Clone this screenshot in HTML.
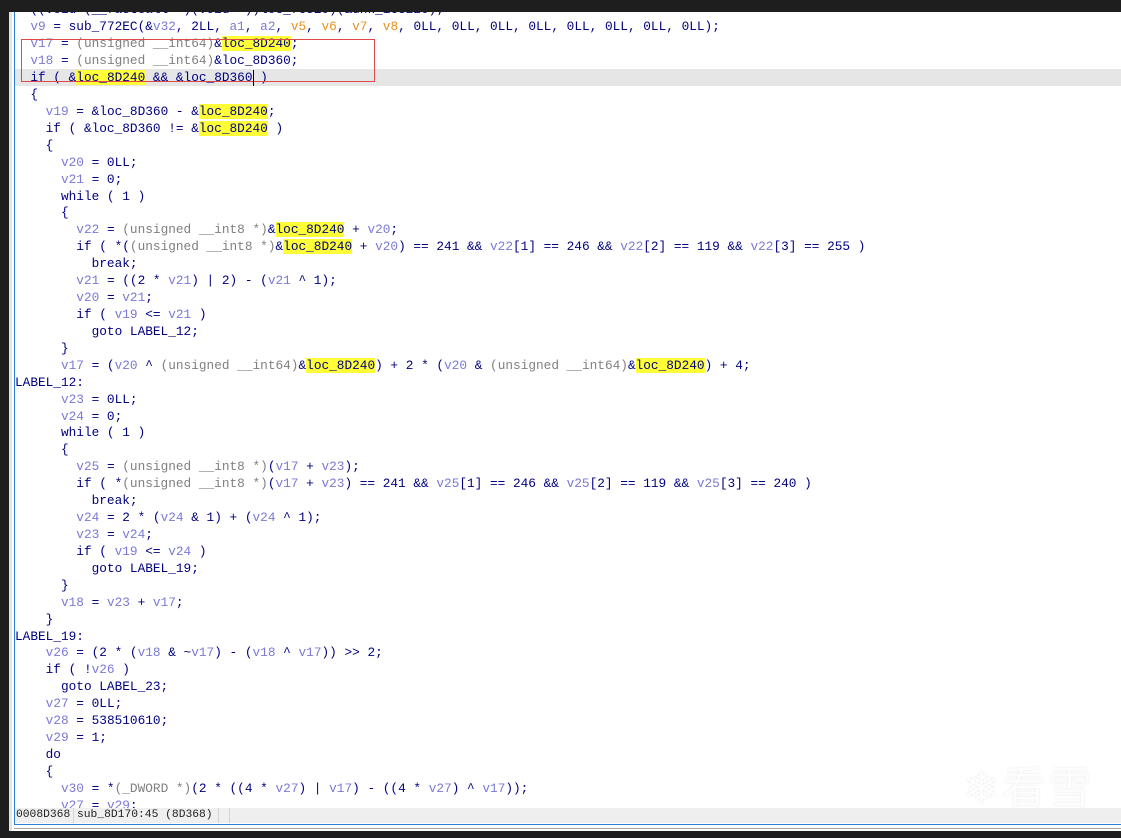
<!DOCTYPE html>
<html><head><meta charset="utf-8"><style>
html,body{margin:0;padding:0;width:1121px;height:838px;overflow:hidden;background:#1e1e1e;}
#main{position:absolute;left:9px;top:12px;width:1112px;height:819px;background:#fff;}
#code{position:absolute;left:15px;top:2.4px;margin:0;font-family:"Liberation Mono",monospace;font-size:12.78px;line-height:16.92px;color:#000080;white-space:pre;}
.v{color:#7a7ad6}.t{color:#808080}.o{color:#e8901e}.h{background:#ffff38}
#curline{position:absolute;left:15px;top:69px;width:1106px;height:17px;background:#e6e6e6;}
#box{position:absolute;left:21px;top:39px;width:354px;height:43px;border:1px solid #e04848;box-sizing:border-box;}
#cursor{position:absolute;left:253px;top:70px;width:1px;height:16px;background:#000;}
#status{position:absolute;left:15px;top:808px;width:1106px;height:15px;background:#efefef;font-family:"Liberation Mono",monospace;font-size:11.3px;line-height:15px;color:#222;}
#status span{position:absolute;top:0}
.sep{position:absolute;top:0;width:1px;height:15px;background:#d4d4d4}
#bl{position:absolute;left:14px;top:824px;width:1107px;height:1px;background:#2a7fd6}
#gl{position:absolute;left:14px;top:828px;width:1107px;height:1px;background:#a8a8a8}
#wm{position:absolute;left:963px;top:752px;font-family:"Noto Sans CJK SC",sans-serif;font-size:44px;color:#fdfdfd;text-shadow:0 0 2px #e6e6e6;letter-spacing:2px;}
</style></head><body>
<div id="main"></div>
<div style="position:absolute;left:9px;top:12px;width:3px;height:819px;background:#e4e4e4"></div>
<div style="position:absolute;left:14px;top:12px;width:1px;height:812px;background:#2a7fd6"></div>
<div id="curline"></div>
<pre id="code">  ((void (__fastcall *)(void *))loc_7C5E0)(&amp;unk_1C3220);
  <span class="v">v9</span> = sub_772EC(&amp;<span class="v">v32</span>, 2LL, <span class="v">a1</span>, <span class="v">a2</span>, <span class="o">v5</span>, <span class="o">v6</span>, <span class="o">v7</span>, <span class="o">v8</span>, 0LL, 0LL, 0LL, 0LL, 0LL, 0LL, 0LL, 0LL);
  <span class="v">v17</span> = <span class="t">(unsigned __int64)</span>&amp;<span class="h">loc_8D240</span>;
  <span class="v">v18</span> = <span class="t">(unsigned __int64)</span>&amp;loc_8D360;
  if ( &amp;<span class="h">loc_8D240</span> &amp;&amp; &amp;loc_8D360 )
  {
    <span class="v">v19</span> = &amp;loc_8D360 - &amp;<span class="h">loc_8D240</span>;
    if ( &amp;loc_8D360 != &amp;<span class="h">loc_8D240</span> )
    {
      <span class="v">v20</span> = 0LL;
      <span class="v">v21</span> = 0;
      while ( 1 )
      {
        <span class="v">v22</span> = <span class="t">(unsigned __int8 *)</span>&amp;<span class="h">loc_8D240</span> + <span class="v">v20</span>;
        if ( *(<span class="t">(unsigned __int8 *)</span>&amp;<span class="h">loc_8D240</span> + <span class="v">v20</span>) == 241 &amp;&amp; <span class="v">v22</span>[1] == 246 &amp;&amp; <span class="v">v22</span>[2] == 119 &amp;&amp; <span class="v">v22</span>[3] == 255 )
          break;
        <span class="v">v21</span> = ((2 * <span class="v">v21</span>) | 2) - (<span class="v">v21</span> ^ 1);
        <span class="v">v20</span> = <span class="v">v21</span>;
        if ( <span class="v">v19</span> &lt;= <span class="v">v21</span> )
          goto LABEL_12;
      }
      <span class="v">v17</span> = (<span class="v">v20</span> ^ <span class="t">(unsigned __int64)</span>&amp;<span class="h">loc_8D240</span>) + 2 * (<span class="v">v20</span> &amp; <span class="t">(unsigned __int64)</span>&amp;<span class="h">loc_8D240</span>) + 4;
LABEL_12:
      <span class="v">v23</span> = 0LL;
      <span class="v">v24</span> = 0;
      while ( 1 )
      {
        <span class="v">v25</span> = <span class="t">(unsigned __int8 *)</span>(<span class="v">v17</span> + <span class="v">v23</span>);
        if ( *<span class="t">(unsigned __int8 *)</span>(<span class="v">v17</span> + <span class="v">v23</span>) == 241 &amp;&amp; <span class="v">v25</span>[1] == 246 &amp;&amp; <span class="v">v25</span>[2] == 119 &amp;&amp; <span class="v">v25</span>[3] == 240 )
          break;
        <span class="v">v24</span> = 2 * (<span class="v">v24</span> &amp; 1) + (<span class="v">v24</span> ^ 1);
        <span class="v">v23</span> = <span class="v">v24</span>;
        if ( <span class="v">v19</span> &lt;= <span class="v">v24</span> )
          goto LABEL_19;
      }
      <span class="v">v18</span> = <span class="v">v23</span> + <span class="v">v17</span>;
    }
LABEL_19:
    <span class="v">v26</span> = (2 * (<span class="v">v18</span> &amp; ~<span class="v">v17</span>) - (<span class="v">v18</span> ^ <span class="v">v17</span>)) &gt;&gt; 2;
    if ( !<span class="v">v26</span> )
      goto LABEL_23;
    <span class="v">v27</span> = 0LL;
    <span class="v">v28</span> = 538510610;
    <span class="v">v29</span> = 1;
    do
    {
      <span class="v">v30</span> = *<span class="t">(_DWORD *)</span>(2 * ((4 * <span class="v">v27</span>) | <span class="v">v17</span>) - ((4 * <span class="v">v27</span>) ^ <span class="v">v17</span>));
      <span class="v">v27</span> = <span class="v">v29</span>;
</pre>
<div id="box"></div>
<div id="cursor"></div>
<div style="position:absolute;left:0;top:0;width:1121px;height:12px;background:#1e1e1e"></div>
<div id="wm">❄看雪</div>
<div id="status"><span style="left:1px">0008D368</span><div class="sep" style="left:58px"></div><span style="left:62px">sub_8D170:45 (8D368)</span><div class="sep" style="left:203px"></div><div class="sep" style="left:214px"></div></div>
<div id="bl"></div>
<div id="gl"></div>
</body></html>
